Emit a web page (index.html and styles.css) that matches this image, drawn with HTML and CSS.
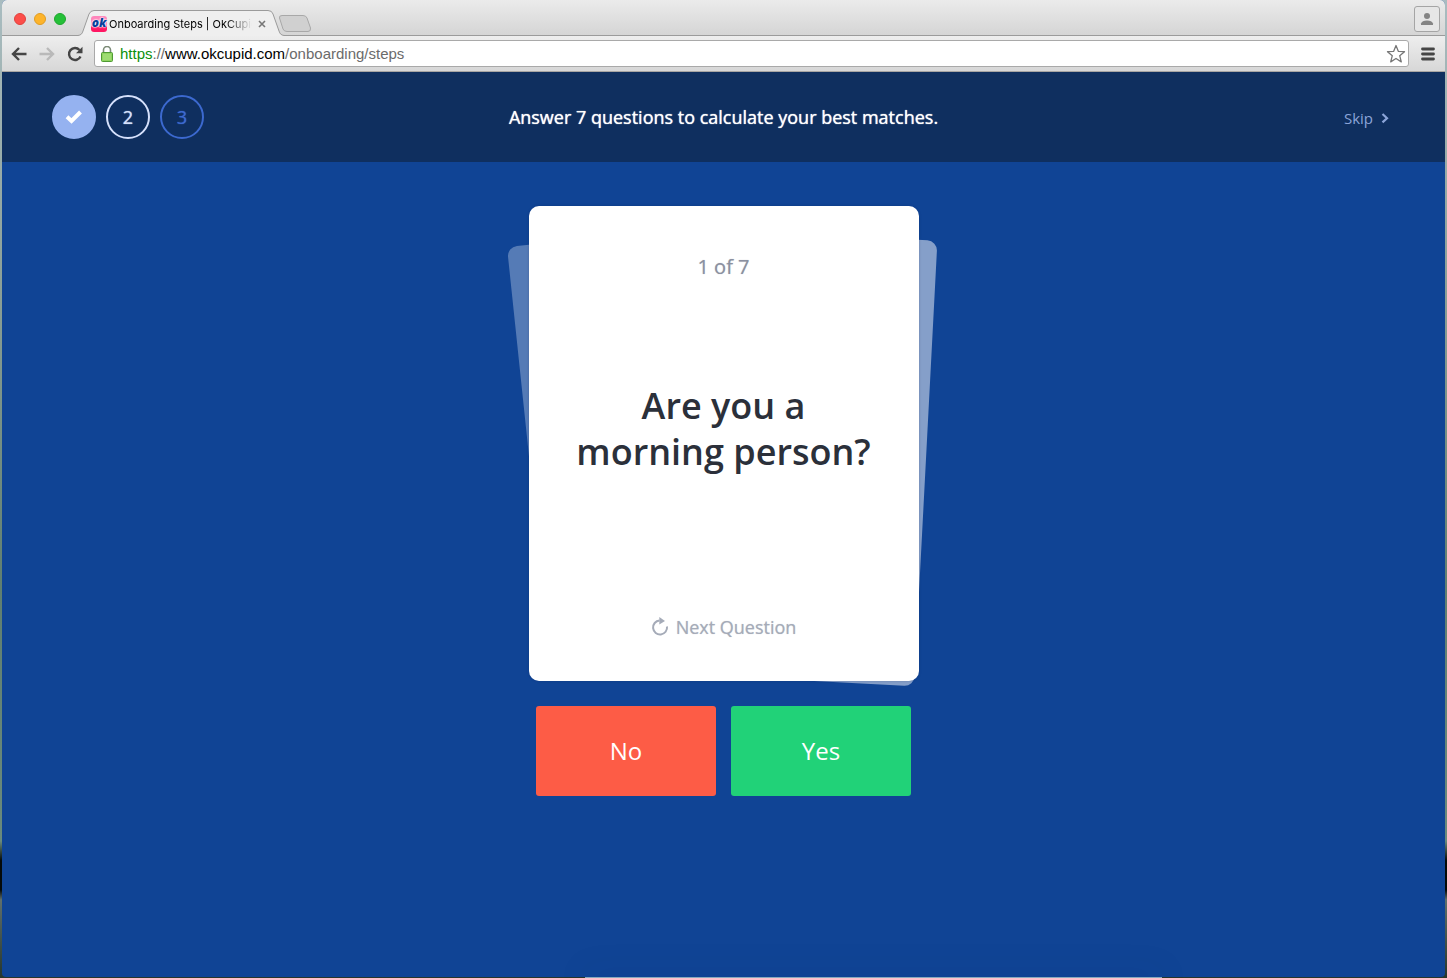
FILE: index.html
```html
<!DOCTYPE html>
<html lang="en">
<head>
<meta charset="utf-8">
<title>Onboarding Steps | OkCupid</title>
<link rel="stylesheet" href="styles.css">
</head>
<body>
<div class="window">
  <div class="tabbar">
    <div class="lights"><button class="light red" aria-label="Close window"></button><button class="light amber" aria-label="Minimize"></button><button class="light green" aria-label="Zoom"></button></div>
    <div class="tab">
      <svg class="tab-shape" width="206" height="26" viewBox="0 0 206 26" aria-hidden="true"><path d="M0 25.5C3 25 4 24 5 21L11 4Q12.500 .5 16 .5H190Q194 .5 195 4L201 21C202 24 203 25 206 25.500V26H0Z" fill="#efefef"/><path d="M0 25.500C3 25 4 24 5 21L11 4Q12.500 .5 16 .5H190Q194 .5 195 4L201 21C202 24 203 25 206 25.500" fill="none" stroke="#9b9b9b"/></svg>
      <span class="favicon">ok</span>
      <span class="tab-title">Onboarding Steps | OkCupid</span>
      <button class="tab-close" aria-label="Close tab"><svg width="8" height="8" viewBox="0 0 8 8"><path d="M1 1l6 6M7 1L1 7" stroke="#777" stroke-width="1.600"/></svg></button>
    </div>
    <button class="new-tab" aria-label="New tab"><svg width="34" height="17" viewBox="0 0 34 17"><path d="M4 .5H25Q28 .5 29 3L32.500 13Q33 16.500 30 16.500H9Q6 16.500 5 14L1.500 3Q1 .5 4 .5Z" fill="#d0d0d0" stroke="#a8a8a8"/></svg></button>
    <button class="profile" aria-label="Profile"><svg width="14" height="14" viewBox="0 0 14 14" fill="#848484"><circle cx="7" cy="4" r="3"/><path d="M1 13V11.500Q2 8.500 7 8.500T13 11.500V13Z"/></svg></button>
  </div>
  <div class="toolbar">
    <button class="nav" aria-label="Back"><svg width="16" height="14" viewBox="0 0 16 14"><path d="M8 1L2 7l6 6M2.500 7H15.500" fill="none" stroke="#454545" stroke-width="2.400"/></svg></button>
    <button class="nav" aria-label="Forward"><svg width="16" height="14" viewBox="0 0 16 14"><path d="M8 1l6 6-6 6M13.500 7H.5" fill="none" stroke="#b9b9b9" stroke-width="2.400"/></svg></button>
    <button class="nav" aria-label="Reload"><svg width="16" height="16" viewBox="0 0 16 16"><path d="M13.500 10.500A6 6 0 1 1 12.500 4" fill="none" stroke="#454545" stroke-width="2.400"/><path d="M15.500 .8V7.200H9Z" fill="#454545"/></svg></button>
    <div class="omnibox">
      <svg width="12" height="16" viewBox="0 0 12 16"><path d="M2.500 8V4a3.500 3.500 0 0 1 7 0V8" fill="none" stroke="#7b8a76" stroke-width="1.600"/><rect x=".5" y="6.500" width="11" height="9" rx="1" fill="#8ed35f" stroke="#4f9a34"/><path d="M2 9H10M2 11H10M2 13H10" stroke="#aee486"/></svg>
      <a class="url" href="https://www.okcupid.com/onboarding/steps"><span class="secure">https</span>://<span class="host">www.okcupid.com</span>/onboarding/steps</a>
      <button class="nav star" aria-label="Bookmark"><svg width="20" height="20" viewBox="0 0 20 20"><path d="M10 1.500L12.300 7.300 18.500 7.700 13.700 11.700 15.300 17.900 10 14.500 4.700 17.900 6.300 11.700 1.500 7.700 7.700 7.300Z" fill="#fff" stroke="#777" stroke-width="1.300" stroke-linejoin="round"/></svg></button>
    </div>
    <button class="nav menu" aria-label="Menu"><svg width="14" height="14" viewBox="0 0 14 14"><path d="M1.500 2H12.500M1.500 7H12.500M1.500 12H12.500" stroke="#454545" stroke-width="2.800" stroke-linecap="round"/></svg></button>
  </div>
  <header class="header">
    <ol class="steps">
      <li class="step done"><svg width="18" height="14" viewBox="0 0 18 14" role="img" aria-label="Step 1 done"><path d="M2 6.800L6.500 11L15.500 2" fill="none" stroke="#fff" stroke-width="4"/></svg></li>
      <li class="step current">2</li>
      <li class="step">3</li>
    </ol>
    <h1 class="title">Answer 7 questions to calculate your best matches.</h1>
    <a class="skip" href="#skip">Skip <svg width="8" height="12" viewBox="0 0 8 12" aria-hidden="true"><path d="M1.500 2L6 6.200 1.500 10.400" fill="none" stroke="currentColor" stroke-width="2.200"/></svg></a>
  </header>
  <main class="main">
    <div class="stack">
      <div class="under under-left"></div>
      <div class="under under-right"></div>
      <section class="card">
        <p class="count">1 of 7</p>
        <h2 class="question">Are you a<br>morning person?</h2>
        <button class="next"><svg width="18" height="20" viewBox="0 0 18 20" aria-hidden="true"><path d="M8.500 3.500A7 7 0 1 0 16 9.500" fill="none" stroke="currentColor" stroke-width="2"/><path d="M8.300 0L14 4 8.300 7.500Z" fill="currentColor"/></svg>Next Question</button>
      </section>
    </div>
    <div class="answers"><button class="answer no">No</button><button class="answer yes">Yes</button></div>
  </main>
</div>
<div class="dock-edge"></div>
</body>
</html>
```
FILE: styles.css
```css
* { box-sizing: border-box; }
body {
  position: relative;
  margin: 0;
  min-height: 100vh;
  padding: 0 2px 1px;
  display: flex;
  overflow-x: hidden;
  font-family: "Open Sans", sans-serif;
  background: linear-gradient(#a9bcc0 0, #8b9f96 30%, #607f70 60%, #6a8a7c 86%, #050a08 88%, #050a08 91%, #5f6f6b 92%, #26362c 100%);
}
button { margin: 0; padding: 0; border: 0; background: none; font: inherit; color: inherit; }
svg { display: block; flex: none; }
.window {
  flex: 1;
  min-width: 0;
  display: flex;
  flex-direction: column;
  border-radius: 5px 5px 4px 4px;
  overflow: hidden;
  background: #104495;
}
.tabbar {
  height: 36px;
  display: flex;
  align-items: flex-end;
  background: linear-gradient(#ebebeb, #d5d5d5);
  border-bottom: 1px solid #9b9b9b;
}
.lights { display: flex; gap: 8px; padding: 0 12px 10px; }
.light { width: 12px; height: 12px; border-radius: 50%; }
.red { background: #fc4e4a; border: 1px solid #e0413d; }
.amber { background: #fdb42b; border: 1px solid #e09c22; }
.green { background: #25c038; border: 1px solid #1ea62e; }
.tab {
  position: relative;
  width: 206px;
  height: 26px;
  margin-bottom: -1px;
  display: flex;
  align-items: center;
  padding: 2px 18px 0 13px;
}
.tab-shape { position: absolute; inset: 0; }
.favicon {
  position: relative;
  width: 16px;
  height: 16px;
  border-radius: 3px;
  background: linear-gradient(#ff86bb 60%, #ff1763 70%);
  color: #0a3f9c;
  font: italic 800 12px/14px "Open Sans", sans-serif;
  text-align: center;
  text-shadow: 0 0 1px #fff, 0 0 1px #fff, 0 0 2px #fff, 0 0 2px #fff;
}
.tab-title {
  position: relative;
  flex: 1;
  margin: 0 6px 0 2px;
  overflow: hidden;
  white-space: nowrap;
  font: 11px/16px Inter, sans-serif;
  color: #000;
  -webkit-mask-image: linear-gradient(90deg, #000 82%, transparent);
  mask-image: linear-gradient(90deg, #000 82%, transparent);
}
.tab-close { position: relative; }
.new-tab { margin: 0 auto 3px -6px; }
.profile {
  width: 26px;
  height: 26px;
  margin: 0 5px 3px;
  display: grid;
  place-items: center;
  border: 1px solid #a5a5a5;
  border-radius: 3px;
  background: #e6e6e6;
}
.toolbar {
  height: 36px;
  display: flex;
  align-items: center;
  gap: 12px;
  padding: 0 10px 0 9px;
  background: linear-gradient(#eeeeee, #d7d7d7);
  border-bottom: 1px solid #a9a6a3;
}
.omnibox {
  flex: 1;
  height: 27px;
  display: flex;
  align-items: center;
  gap: 7px;
  margin-left: -1px;
  padding: 0 2px 0 6px;
  border: 1px solid #a9a9a9;
  border-radius: 3px;
  background: #fff;
}
.url { flex: 1; font: 15px/20px "Liberation Sans", sans-serif; color: #6b6b6b; text-decoration: none; }
.secure { color: #0b8f0b; }
.host { color: #000; }
.header {
  height: 90px;
  display: grid;
  grid-template-columns: 1fr auto 1fr;
  align-items: center;
  padding: 0 50px;
  background: #0f2f5f;
}
.steps { display: flex; gap: 10px; margin: 0; padding: 0; list-style: none; }
.step {
  width: 44px;
  height: 44px;
  display: grid;
  place-items: center;
  border: 2px solid #3c69cf;
  border-radius: 50%;
  color: #3c69cf;
  font-size: 18px;
  line-height: 24px;
  text-shadow: 0 0 1px #3c69cf;
}
.done { background: #95b2f0; border-color: #95b2f0; }
.current { border-color: #d5e0fb; color: #d5e0fb; text-shadow: 0 0 1px #d5e0fb; }
.title {
  margin: 0;
  font-size: 18px;
  line-height: 26px;
  font-weight: 400;
  color: #fff;
  text-shadow: 0 0 1px #fff;
}
.skip {
  justify-self: end;
  display: flex;
  align-items: center;
  gap: 8px;
  padding: 2px 6px 0 0;
  font-size: 15px;
  line-height: 22px;
  color: #8ba4d8;
  text-decoration: none;
}
.main { flex: 1; display: flex; flex-direction: column; align-items: center; gap: 25px; padding: 44px 0; }
.stack { position: relative; width: 390px; }
.under { position: absolute; border-radius: 10px; }
.under-left {
  left: -22px;
  top: 41px;
  width: 350px;
  height: 425px;
  transform: rotate(-6deg);
  transform-origin: 0 0;
  background: #557bb6;
}
.under-right { left: 31px; top: 25px; width: 366px; height: 446px; transform: rotate(3deg); background: #859fc9; }
.card {
  position: relative;
  height: 475px;
  display: flex;
  flex-direction: column;
  align-items: center;
  padding: 47px 20px 41px;
  border-radius: 10px;
  background: #fff;
  box-shadow: 0 0 3px rgba(0, 20, 70, 0.2);
}
.count { margin: 0; font-size: 20px; line-height: 28px; color: #8b90a0; text-shadow: 0 0 1px #b5b9c4; }
.question {
  margin: 102px 0 auto;
  font-size: 36px;
  line-height: 46px;
  font-weight: 600;
  color: #2b303a;
  text-align: center;
}
.next {
  display: flex;
  align-items: center;
  gap: 7px;
  font-size: 18px;
  line-height: 26px;
  color: #a5abb8;
  text-shadow: 0 0 1px #c5c9d2;
}
.answers { display: flex; gap: 15px; }
.answer { width: 180px; height: 90px; border-radius: 3px; font-size: 24px; line-height: 32px; color: #fff; }
.no { background: #fd5c46; }
.yes { background: #21d278; }
.dock-edge {
  position: absolute;
  left: 585px;
  right: 285px;
  bottom: 0;
  height: 1px;
  background: #86a9bd;
  box-shadow: 0 0 30px rgba(10, 45, 90, 0.6);
}
```
